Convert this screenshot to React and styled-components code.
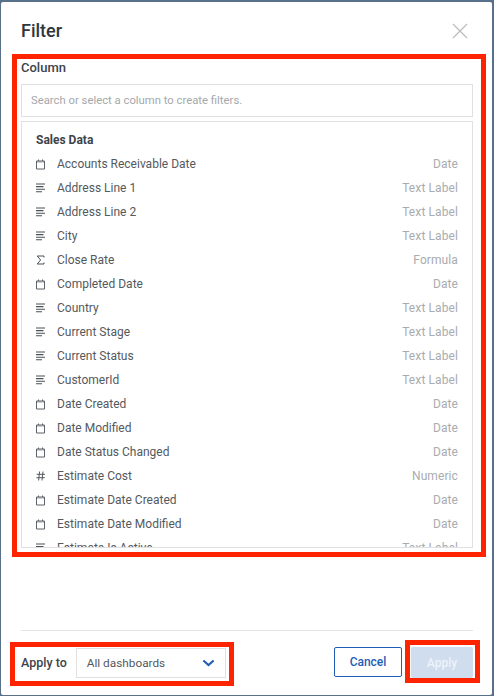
import React from 'react';
import styled, { createGlobalStyle } from 'styled-components';

const columns = [
    ['date', 'Accounts Receivable Date', 'Date'],
    ['text', 'Address Line 1', 'Text Label'],
    ['text', 'Address Line 2', 'Text Label'],
    ['text', 'City', 'Text Label'],
    ['formula', 'Close Rate', 'Formula'],
    ['date', 'Completed Date', 'Date'],
    ['text', 'Country', 'Text Label'],
    ['text', 'Current Stage', 'Text Label'],
    ['text', 'Current Status', 'Text Label'],
    ['text', 'CustomerId', 'Text Label'],
    ['date', 'Date Created', 'Date'],
    ['date', 'Date Modified', 'Date'],
    ['date', 'Date Status Changed', 'Date'],
    ['numeric', 'Estimate Cost', 'Numeric'],
    ['date', 'Estimate Date Created', 'Date'],
    ['date', 'Estimate Date Modified', 'Date'],
    ['text', 'Estimate Is Active', 'Text Label'],
];

const TypeIcon = ({ type }) => {
    if (type === 'date') {
        return (
            <svg width="10" height="11" viewBox="0 0 10 11" fill="none" stroke="#5d6369" strokeWidth="1">
                <path d="M.5 2h8v8h-8z" />
                <path d="M2.5 .5v1.5M6.5 .5v1.5" />
                <path d="M.5 3h8" strokeWidth=".6" />
            </svg>
        );
    }
    if (type === 'text') {
        return (
            <svg width="10" height="10" viewBox="0 0 10 10" fill="none" stroke="#4a5056" strokeWidth="1.1">
                <path d="M0 1h9M0 3.6h7.5M0 6.2h9M0 8.8h6" />
            </svg>
        );
    }
    if (type === 'formula') {
        return (
            <svg width="10" height="10" viewBox="0 0 10 10" fill="none" stroke="#4a5056" strokeWidth="1">
                <path d="M8 2.4v-1.4h-6.8l3.4 4-3.4 4h6.8v-1.4" />
            </svg>
        );
    }
    return (
        <svg width="10" height="10" viewBox="0 0 10 10" fill="none" stroke="#555b61" strokeWidth="1">
            <path d="M3.6 .5l-1 9M7 .5l-1 9M.6 3.3h8.4M.4 6.7h8.4" />
        </svg>
    );
};

export default function App() {
    return (
        <Backdrop>
            <GlobalStyle />
            <Modal>
                <Header>
                    <Title>Filter</Title>
                    <CloseButton aria-label="close">
                        <svg width="16" height="16" viewBox="0 0 16 16" fill="none" stroke="#b9bcbf" strokeWidth="1.2">
                            <path d="M1 1l14 14M15 1l-14 14" />
                        </svg>
                    </CloseButton>
                </Header>

                <Body>
                    <Label>Column</Label>
                    <SearchInput placeholder="Search or select a column to create filters." />
                    <ListBox>
                        <GroupTitle>Sales Data</GroupTitle>
                        {columns.map(([type, name, kind]) => (
                            <Row key={name}>
                                <IconCell><TypeIcon type={type} /></IconCell>
                                <RowName>{name}</RowName>
                                <RowKind>{kind}</RowKind>
                            </Row>
                        ))}
                    </ListBox>
                </Body>

                <Footer>
                    <ApplyTo>
                        <ApplyLabel>Apply to</ApplyLabel>
                        <Select>
                            All dashboards
                            <svg width="13" height="8" viewBox="0 0 14 8" fill="none" stroke="#1f5db5" strokeWidth="2.2">
                                <path d="M1.5 1.2l5.5 5 5.5-5" />
                            </svg>
                        </Select>
                    </ApplyTo>
                    <Actions>
                        <CancelButton>Cancel</CancelButton>
                        <ApplyButton disabled>Apply</ApplyButton>
                    </Actions>
                </Footer>
            </Modal>

            <Highlight $left={12} $top={54} $width={474} $height={503} />
            <Highlight $left={10} $top={642} $width={224} $height={44} />
            <Highlight $left={405} $top={640} $width={75} $height={43} />
        </Backdrop>
    );
}

const GlobalStyle = createGlobalStyle`
    html, body {
        margin: 0;
        padding: 0;
    }
    body {
        font-family: Roboto, "Liberation Sans", sans-serif;
    }
`;

const Backdrop = styled.div`
    position: relative;
    box-sizing: border-box;
    width: 494px;
    height: 696px;
    padding: 2px 2px 1px 1px;
    background: #587089;
    overflow: hidden;
`;

const Modal = styled.div`
    display: flex;
    flex-direction: column;
    box-sizing: border-box;
    height: 100%;
    padding: 0 19px 0 20px;
    background: #fff;
    border-radius: 2px;
`;

const Header = styled.div`
    display: flex;
    align-items: center;
    justify-content: space-between;
    height: 57px;
    flex-shrink: 0;
`;

const Title = styled.h2`
    margin: 0;
    font-size: 18px;
    font-weight: 500;
    color: #2f373e;
`;

const CloseButton = styled.button`
    display: flex;
    margin-right: 5px;
    padding: 0;
    border: 0;
    background: none;
`;

const Body = styled.div`
    flex: 1;
    min-height: 0;
`;

const Label = styled.div`
    font-size: 13px;
    line-height: 18px;
    font-weight: 500;
    color: #3d4349;
`;

const ApplyLabel = styled.span`
    font-size: 12.5px;
    line-height: 18px;
    font-weight: 500;
    color: #3d4349;
`;

const SearchInput = styled.input`
    display: block;
    box-sizing: border-box;
    width: 100%;
    height: 33px;
    margin: 7px 0 4px;
    padding: 0 9px;
    border: 1px solid #e0e0e0;
    outline: none;
    font-family: inherit;
    font-size: 11.3px;

    &::placeholder {
        color: #a5a8ab;
        opacity: 1;
    }
`;

const ListBox = styled.div`
    box-sizing: border-box;
    height: 427px;
    padding: 9px 14px 0;
    border: 1px solid #e0e0e0;
    overflow: hidden;
`;

const GroupTitle = styled.div`
    font-size: 12px;
    line-height: 18px;
    font-weight: 700;
    color: #3d4349;
    margin-bottom: 3px;
`;

const Row = styled.div`
    display: flex;
    align-items: center;
    height: 24px;
    font-size: 12px;
`;

const IconCell = styled.span`
    display: flex;
    width: 21px;
    flex-shrink: 0;
`;

const RowName = styled.span`
    flex: 1;
    color: #54595e;
`;

const RowKind = styled.span`
    color: #a9acaf;
    letter-spacing: 0.1px;
`;

const Footer = styled.div`
    display: flex;
    align-items: flex-start;
    justify-content: space-between;
    flex-shrink: 0;
    height: 65px;
    padding-top: 16px;
    box-sizing: border-box;
    border-top: 1px solid #e2e4e6;
`;

const ApplyTo = styled.div`
    display: flex;
    align-items: center;
    gap: 9px;
    margin-top: 1px;
`;

const Select = styled.div`
    display: flex;
    align-items: center;
    justify-content: space-between;
    box-sizing: border-box;
    width: 150px;
    height: 30px;
    padding: 0 10px;
    border: 1px solid #e0e0e0;
    font-size: 11.8px;
    color: #54595e;
`;

const Actions = styled.div`
    display: flex;
    gap: 9px;
`;

const CancelButton = styled.button`
    box-sizing: border-box;
    width: 68px;
    height: 30px;
    padding: 0;
    border: 1px solid #1f5db5;
    border-radius: 2px;
    background: #fff;
    color: #1f5db5;
    font-family: inherit;
    font-size: 12px;
    font-weight: 500;
`;

const ApplyButton = styled.button`
    box-sizing: border-box;
    width: 62px;
    height: 31px;
    padding: 0;
    border: 0;
    border-radius: 2px;
    background: #cfddef;
    color: #eef3f9;
    font-family: inherit;
    font-size: 12px;
    font-weight: 500;
`;

const Highlight = styled.div`
    position: absolute;
    box-sizing: border-box;
    left: ${p => p.$left}px;
    top: ${p => p.$top}px;
    width: ${p => p.$width}px;
    height: ${p => p.$height}px;
    border: 5px solid #fe2400;
    pointer-events: none;
`;
